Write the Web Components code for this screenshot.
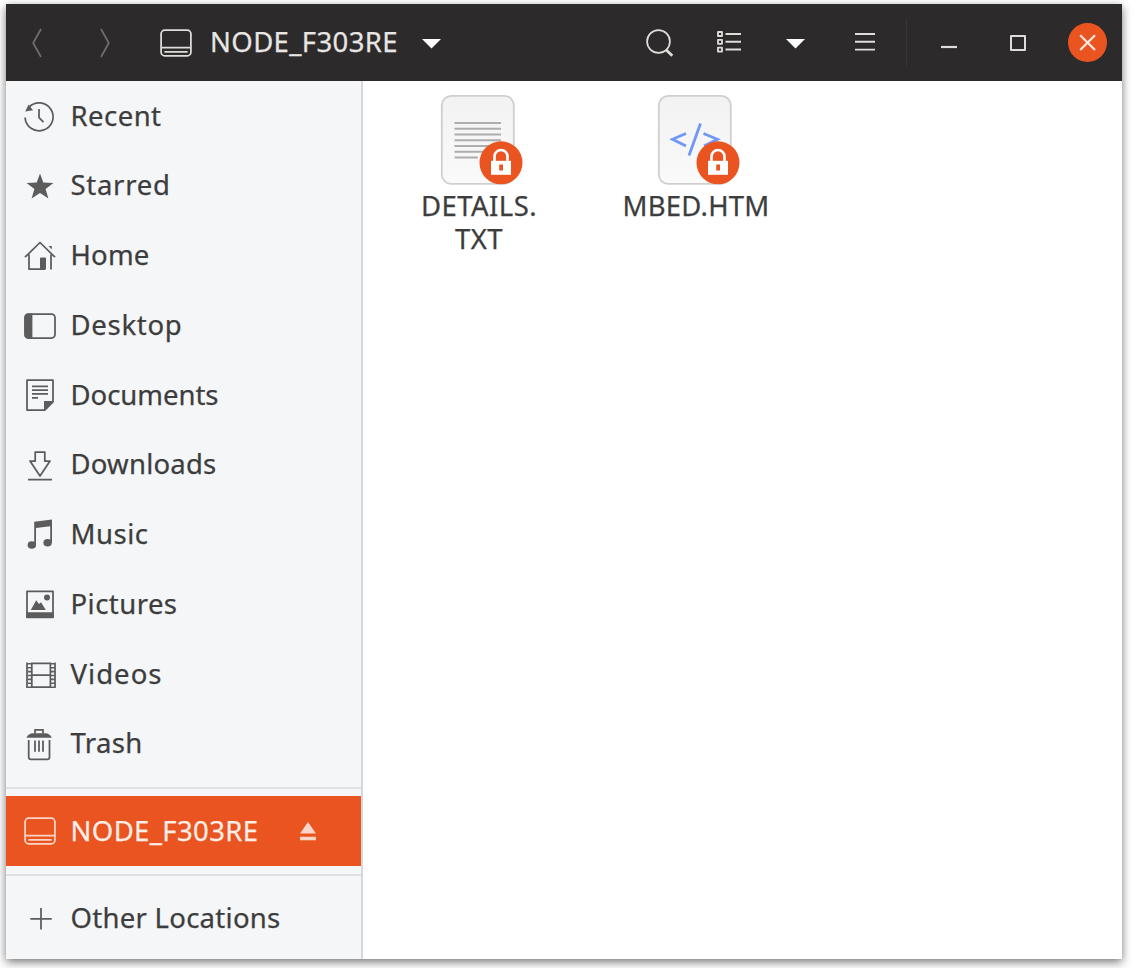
<!DOCTYPE html>
<html lang="en">
<head>
<meta charset="utf-8">
<title>NODE_F303RE</title>
<style>
html,body{margin:0;height:100%;background:#fff;overflow:hidden}
body{font-family:"Noto Sans","Open Sans",sans-serif;font-size:27.5px;color:#3d3d3d}
</style>
</head>
<body>
<file-window>
  <header-bar slot="header"></header-bar>
  <side-bar slot="side">
    <place-item icon="recent" fit="88">Recent</place-item>
    <place-item icon="star" fit="97">Starred</place-item>
    <place-item icon="home" fit="76">Home</place-item>
    <place-item icon="desktop" fit="109">Desktop</place-item>
    <place-item icon="documents" fit="145">Documents</place-item>
    <place-item icon="downloads" fit="143">Downloads</place-item>
    <place-item icon="music" fit="75">Music</place-item>
    <place-item icon="pictures" fit="104">Pictures</place-item>
    <place-item icon="videos" fit="89">Videos</place-item>
    <place-item icon="trash" fit="69">Trash</place-item>
    <side-rule></side-rule>
    <place-item icon="drive" fit="185" selected>NODE_F303RE</place-item>
    <side-rule></side-rule>
    <place-item icon="plus" fit="207">Other Locations</place-item>
  </side-bar>
  <file-item kind="text"><fit-text width="113" chars="8">DETAILS.<br>TXT</fit-text></file-item>
  <file-item kind="html"><fit-text width="144">MBED.HTM</fit-text></file-item>
</file-window>
<script>
const ICONS = {
  recent:'<path d="M1.1 17.5A14 14 0 1 0 5 7.1" class="l"/><path d="M4.6 4.4 9 10.3 1.2 11.6Z" class="f"/><path d="M15 9v8.6l4.5 4.6" class="l"/>',
  star:'<path d="M16 3.4 19.3 12.5 29.4 13 21.6 19 24.4 28.5 16 23.1 7.6 28.5 10.4 19 2.6 13 12.7 12.5Z" class="f"/>',
  home:'<path d="M1 17.2 16 2.5 31 17.2M5 14.5V29H21M27 14.5V29.6" class="l"/><path d="M16 18.5q0-1 1-1h4q1 0 1 1V29.6h-6zM24.5 6h3.3v3.6z" class="f"/>',
  desktop:'<rect x="1" y="5" width="30" height="24" rx="3.4" class="l"/><path d="M8.4 4.5H4Q.5 4.5.5 8v18q0 3.5 3.5 3.5h4.4z" class="f"/>',
  documents:'<path d="M3 1h26v22l-8 8H3z" class="l"/><path d="M20 22h9.6L20 31.8zM8 6.6h16v1.7H8zm0 3.7h16v1.7H8zm0 3.8h16v1.7H8zm0 3.9h6v1.7H8z" class="f"/>',
  downloads:'<path d="M11.2 3.2h9.6V12H26L16 27 6 12h5.2zM4 30.7h24" class="l"/>',
  music:'<path d="M10.2 2.8 28 .6V23.5h-1.8V7.2L12 9V26h-1.8z" class="f"/><ellipse cx="7.8" cy="26" rx="4.2" ry="3.8" class="f"/><ellipse cx="23.6" cy="23.8" rx="4.2" ry="3.8" class="f"/>',
  pictures:'<rect x="3" y="3.3" width="26" height="26" class="l"/><path d="M2.4 24.3h27.2V30H2.4zM6.8 22 12.2 12.3 15 16l2-1.8L21.8 22z" class="f"/><circle cx="23" cy="9.6" r="3" class="f"/>',
  videos:'<path d="M3 4.4v25.6M31 4.4v25.6M7.8 4.4v25.6M26.4 4.4v25.6M7.8 5.3h18.6M7.8 17h18.6M7.8 29.2h18.6" class="l"/><path d="M5.4 5v25M28.7 5v25" stroke="currentColor" stroke-width="3.6" stroke-dasharray="1.6 2.3"/>',
  trash:'<path d="M4.7 12v17q0 2.4 2.4 2.4h16q2.4 0 2.4-2.4V12M11 12.4v11.4M15 12.4v11.4M19 12.4v11.4" class="l"/><path d="M2.4 9.8q2-4.6 6.6-4.6h12.2q4.6 0 6.6 4.6z" class="f"/><path d="M11 5.5V1.8h8v3.7" class="l"/>',
  drive:'<rect x="1.1" y="3.2" width="29.8" height="25.6" rx="3.6" class="l"/><path d="M1 20.6h30M4.4 24.9h23.2" class="l"/>',
  plus:'<path d="M6.3 16.8h21.4M17 6v21.6" class="l"/>'
};
const svg = (inner, w, h, attrs = '') =>
  `<svg ${attrs} width="${w}" height="${h}" viewBox="0 0 ${w} ${h}" fill="none" stroke-linejoin="round">${inner}</svg>`;
const SVG_CSS = 'svg{display:block;flex:none;overflow:visible}.l{stroke:currentColor;stroke-width:1.75}.f{fill:currentColor}';
function define(name, css, html, ready) {
  customElements.define(name, class extends HTMLElement {
    connectedCallback() {
      if (this.shadowRoot) return;
      const root = this.attachShadow({mode:'open'});
      root.innerHTML = `<style>${css}</style>` + (typeof html === 'function' ? html(this) : html);
      if (ready) ready(this, root);
    }
  });
}

// Text tracked so that its longest line takes the given width.
define('fit-text', ':host{display:block;white-space:nowrap;line-height:33px;margin-top:-2px;-webkit-text-stroke:.25px currentColor}span{display:inline-block;text-align:center}', '<span><slot></slot></span>', (el, root) => {
  const s = root.querySelector('span'), n = Number(el.getAttribute('chars')) || el.textContent.length;
  const step = (Number(el.getAttribute('width')) + 3 - s.getBoundingClientRect().width) / n;
  s.style.letterSpacing = step.toFixed(3) + 'px';
});

define('side-rule', ':host{display:block;height:2px;margin:7.75px 0;background:#dfe1e2}', '');

define('place-item', `:host{display:flex;align-items:center;height:69.75px;padding-left:18px;color:#5c5c5c}
:host([selected]){background:#e95420;color:#fbd5c8}${SVG_CSS}
fit-text{margin-left:14.5px;color:#3d3d3d}:host([selected]) fit-text{color:#fdeee8}.eject{margin-left:41px}`,
  el => svg(ICONS[el.getAttribute('icon')], 32, 32) +
    `<fit-text width="${el.getAttribute('fit')}">${el.textContent}</fit-text>` +
    (el.hasAttribute('selected') ? svg('<path d="M8 0 16 11.6H0zM0 14.7h16v3.5H0z" class="f"/>', 16, 18, 'class="eject"') : ''));

define('side-bar', ':host{display:block;box-sizing:border-box;width:357px;background:#f4f6f8;border-right:2px solid #d6d8d9}', '<slot></slot>');

define('header-bar', `:host{display:flex;align-items:center;height:77px;background:#2c2a2b;color:#deddda}${SVG_CSS}
.dim{color:#6f6e6e}.sep{width:1px;height:46px;background:#383637}
fit-text{color:#e8e6e3}.space{flex:1}`,
  svg('<path d="M9 1 1.2 15 9 29" class="l"/>', 10, 30, 'class="dim" style="margin-left:26px"') +
  svg('<path d="M1 1 8.8 15 1 29" class="l"/>', 10, 30, 'class="dim" style="margin-left:58px"') +
  svg(ICONS.drive, 32, 32, 'style="margin-left:49.5px"') +
  '<fit-text width="185" style="margin-left:18.5px">NODE_F303RE</fit-text>' +
  svg('<path d="M0 0h19L9.5 9.5z" fill="#fff"/>', 19, 9, 'style="margin-left:23.5px;margin-top:1px"') +
  '<span class="space"></span>' +
  svg('<circle cx="12.5" cy="12.5" r="11.4" class="l"/><path d="m20 20.8 6.3 6" stroke="currentColor" stroke-width="2.8"/>', 27, 28, 'style="margin-right:44.5px"') +
  svg('<path d="M1 1h4v4H1zM1 8.8h4v4H1zM1 16.6h4v4H1z" stroke="currentColor" stroke-width="1.8"/><path d="M8.5 3H24M8.5 10.8H24M8.5 18.6H24" stroke="currentColor" stroke-width="2"/>', 24, 22, 'style="margin-right:45px;margin-top:-1px"') +
  svg('<path d="M0 0h19L9.5 9.5z" fill="#fff"/>', 19, 9, 'style="margin-right:50px;margin-top:1px"') +
  svg('<path d="M0 1h20M0 8.8h20M0 16.6h20" stroke="currentColor" stroke-width="1.9"/>', 20, 18, 'style="margin-right:31px;margin-top:-2px"') +
  '<span class="sep"></span>' +
  svg('<path d="M0 1h16" stroke="currentColor" stroke-width="2.2"/>', 16, 2, 'style="margin-left:33.5px;margin-right:53.5px;margin-top:9px"') +
  svg('<rect x="1" y="1" width="14" height="14" stroke="currentColor" stroke-width="2"/>', 16, 16, 'style="margin-right:42px"') +
  svg('<circle cx="19.5" cy="19.5" r="19.5" fill="#e95420"/><path d="m12.2 12.2 14.8 14.8M27 12.2 12.2 27" stroke="#fbe6de" stroke-width="2.3"/>', 39, 39, 'style="margin-right:15px"'));

const PAGE = '<defs><linearGradient id="g" x1="0" y1="0" x2="0" y2="1"><stop offset="0" stop-color="#f2f2f2"/><stop offset="1" stop-color="#fafafa"/></linearGradient></defs><rect x=".8" y=".8" width="72" height="88" rx="9.5" fill="url(#g)" stroke="#cfcfcf" stroke-width="1.8"/>';
const GLYPH = {
  text:'<path d="M13.5 27.9H60M13.5 33.7H60M13.5 39.5H60M13.5 45.2H60M13.5 51H60M13.5 56.8H60M13.5 62.5H37" stroke="#adadad" stroke-width="2"/>',
  html:'<path d="M28 38.5 14.5 44.3 28 51M45.5 38.5 59.5 44.3 46 51M42.5 28.5 31 60.5" stroke="#7096f8" stroke-width="2.8" stroke-linejoin="miter"/>'
};
const LOCK = '<circle cx="60" cy="67.8" r="21.5" fill="#e95420"/><path d="M53.5 66v-4.5a6.5 6.5 0 0 1 13 0V66" stroke="#fff" stroke-width="2.6"/><path d="M50 65.8h20v14H50z" fill="#fff"/><path d="M58.2 69.5h3.8v6h-3.8z" fill="#e95420"/>';
define('file-item', `:host{display:flex;flex-direction:column;align-items:center;width:217px;color:#3d3d3d}${SVG_CSS}.name{padding:6px 0 0 3px}`,
  el => svg(PAGE + GLYPH[el.getAttribute('kind')] + LOCK, 74, 90) + '<div class="name"><slot></slot></div>');

define('file-window', `:host{display:block;padding:4px 14px 9px 6px;box-sizing:border-box;height:968px}
.win{display:flex;flex-direction:column;height:955px;background:#fff;box-shadow:0 3px 9px rgba(0,0,0,.55)}
.body{display:flex;flex:1;min-height:0;padding-top:.25px}.files{display:flex;flex:1;align-items:flex-start;padding:14px 0 0 6px}`,
  '<div class="win"><slot name="header"></slot><div class="body"><slot name="side"></slot><div class="files"><slot></slot></div></div></div>');
</script>
</body>
</html>
